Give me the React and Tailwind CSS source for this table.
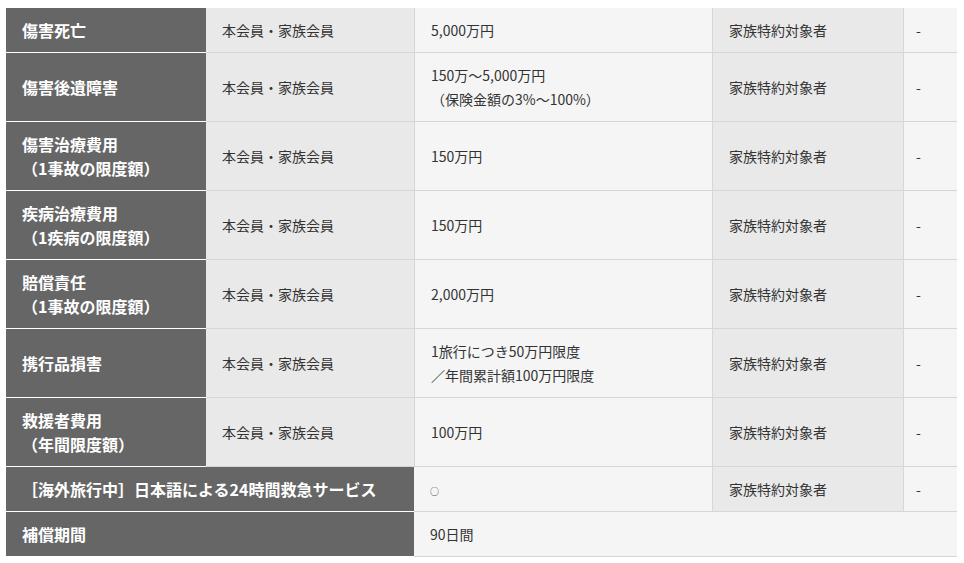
import React from "react";

const rows = [
  { title: ["傷害死亡"], target: "本会員・家族会員", amount: ["5,000万円"] },
  {
    title: ["傷害後遺障害"],
    target: "本会員・家族会員",
    amount: ["150万～5,000万円", "（保険金額の3%～100%）"],
  },
  { title: ["傷害治療費用", "（1事故の限度額）"], target: "本会員・家族会員", amount: ["150万円"] },
  { title: ["疾病治療費用", "（1疾病の限度額）"], target: "本会員・家族会員", amount: ["150万円"] },
  { title: ["賠償責任", "（1事故の限度額）"], target: "本会員・家族会員", amount: ["2,000万円"] },
  {
    title: ["携行品損害"],
    target: "本会員・家族会員",
    amount: ["1旅行につき50万円限度", "／年間累計額100万円限度"],
  },
  { title: ["救援者費用", "（年間限度額）"], target: "本会員・家族会員", amount: ["100万円"] },
];

const th = "bg-[#666666] text-white font-bold text-[16px] leading-6 pl-4 pr-3 py-[10px] border-b border-white text-left align-middle";
const tdBase = "text-[14px] leading-6 text-[#333333] py-[10px] border-b border-[#d6d6d6] align-middle";

const Lines = ({ lines }) =>
  lines.map((l, i) => (
    <React.Fragment key={i}>
      {i > 0 && <br />}
      {l}
    </React.Fragment>
  ));

export default function App() {
  return (
    <div className="bg-white min-h-[563px] pt-2 pl-[6px] font-['Noto_Sans_CJK_JP',sans-serif]">
      <table className="w-[951px] border-separate border-spacing-0 table-fixed">
        <colgroup>
          <col className="w-[200px]" />
          <col className="w-[208px]" />
          <col className="w-[298px]" />
          <col className="w-[191px]" />
          <col className="w-[54px]" />
        </colgroup>
        <tbody>
          {rows.map((r, i) => (
            <tr key={i}>
              <th className={th}>
                <Lines lines={r.title} />
              </th>
              <td className={`${tdBase} bg-[#e9e9e9] pl-4`}>{r.target}</td>
              <td className={`${tdBase} bg-[#f5f5f5] pl-4 border-l`}>
                <Lines lines={r.amount} />
              </td>
              <td className={`${tdBase} bg-[#e9e9e9] pl-4 border-l`}>家族特約対象者</td>
              <td className={`${tdBase} bg-[#f5f5f5] pl-3 border-l`}>-</td>
            </tr>
          ))}
          <tr>
            <th colSpan={2} className={th}>
              ［海外旅行中］日本語による24時間救急サービス
            </th>
            <td className={`${tdBase} bg-[#f5f5f5] pl-4`}>
              <span className="inline-block align-middle text-[9px] leading-none">○</span>
            </td>
            <td className={`${tdBase} bg-[#e9e9e9] pl-4 border-l`}>家族特約対象者</td>
            <td className={`${tdBase} bg-[#f5f5f5] pl-3 border-l`}>-</td>
          </tr>
          <tr>
            <th colSpan={2} className={th}>
              補償期間
            </th>
            <td colSpan={3} className={`${tdBase} bg-[#f5f5f5] pl-4`}>
              90日間
            </td>
          </tr>
        </tbody>
      </table>
    </div>
  );
}
